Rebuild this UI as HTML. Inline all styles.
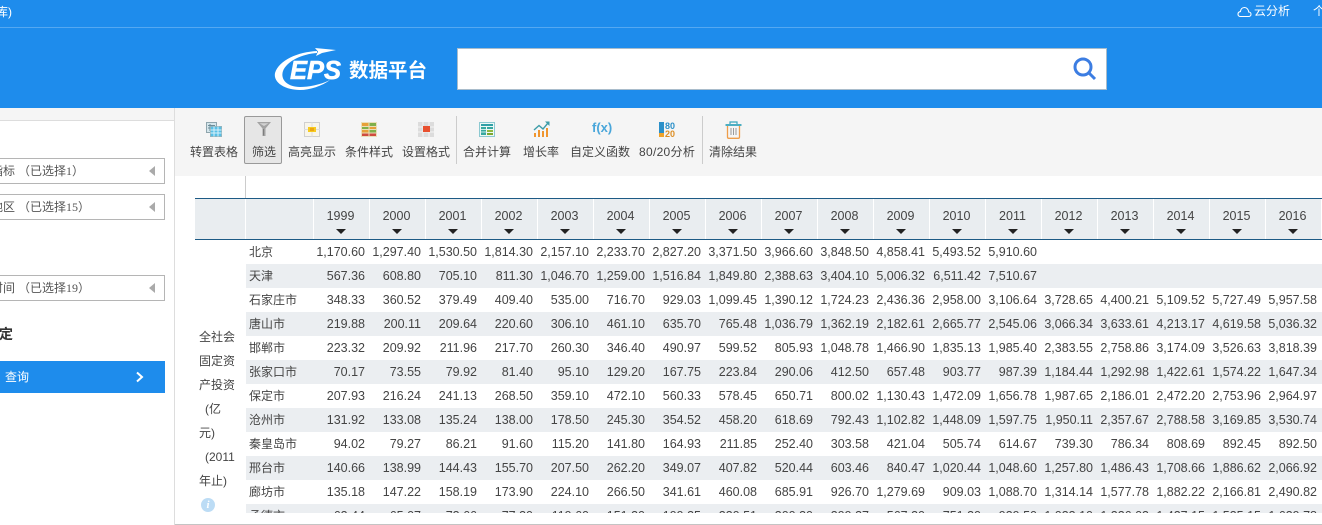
<!DOCTYPE html>
<html><head><meta charset="utf-8"><style>
*{box-sizing:border-box}
html,body{margin:0;padding:0}
body{width:1322px;height:525px;overflow:hidden;position:relative;background:#fff;font-family:"Liberation Sans","Noto Sans CJK SC",sans-serif;color:#333;font-size:12px}
.a{position:absolute;white-space:nowrap}
.tb{position:absolute;top:145px;height:14px;line-height:14px;font-size:12px;color:#444;white-space:nowrap}
.sel{position:absolute;left:-2px;width:167px;height:26px;border:1px solid #b5b5b5;background:#fff;overflow:hidden}
.sel span{position:absolute;left:-8px;top:5px;line-height:15px;font-size:12px;color:#555;white-space:nowrap;font-family:"Liberation Serif","Noto Sans CJK SC",serif}
.sel i{position:absolute;right:9px;top:7px;width:0;height:0;border:5px solid transparent;border-left:0;border-right:6px solid #aaa}
.hd{position:absolute;top:199px;height:40px;background:#e9edf0;border-right:1px solid #fff;text-align:center;font-size:12.5px;line-height:35px;color:#444;padding-right:2px}
.hd:after{content:"";position:absolute;left:50%;margin-left:-6px;top:30px;border:5px solid transparent;border-bottom:0;border-top:5px solid #222}
.wrap{position:absolute;left:246px;top:240px;width:1076px;height:273px;overflow:hidden}
table{border-collapse:collapse;table-layout:fixed;width:1076px;font-size:12.5px;color:#444}
td{height:24px;padding:0 5px 0 0;text-align:right;white-space:nowrap;overflow:hidden;line-height:24px}
td:first-child{text-align:left;padding:0 0 0 3px;font-size:12px;color:#444}
tr:nth-child(even) td{background:#ebeef1}
.r{position:absolute;left:199px;font-size:12px;color:#444;line-height:24px;white-space:nowrap}
</style></head><body>
<div class="a" style="left:0;top:0;width:1322px;height:108px;background:#1e8cec"></div>
<div class="a" style="left:0;top:27px;width:1322px;height:1px;background:#55a8f1"></div>
<div class="a" style="left:-4px;top:5px;color:#fff;font-size:12px;line-height:15px">库)</div>
<svg class="a" style="left:1237px;top:6px" width="15" height="12" viewBox="0 0 15 12"><path d="M3.5 10.5H11.5C13 10.5 14 9.5 14 8.2C14 7 13 6 11.7 6C11.5 3.5 9.8 1.5 7.5 1.5C5.2 1.5 3.7 3.3 3.4 5.6C2 5.8 1 6.8 1 8.2C1 9.5 2 10.5 3.5 10.5Z" fill="none" stroke="#fff" stroke-width="1.1"/></svg>
<div class="a" style="left:1254px;top:4px;color:#fff;font-size:12px;line-height:15px">云分析</div>
<div class="a" style="left:1313px;top:4px;color:#fff;font-size:12px;line-height:15px">个</div>
<svg class="a" style="left:272px;top:46px" width="70" height="46" viewBox="0 0 70 46"><path d="M64 4L43 2L46 5.500L44 10L50 7Z" fill="#fff"/><path d="M45 5C26 6 7 14 3 27C1 37 14 44 28 44C38 44 50 40 58 34C48 39 36 41 28 41C16 41 8 34 11 25C15 15 30 8 45 7Z" fill="#fff"/></svg>
<div class="a" style="left:290px;top:53px;color:#fff;font:italic bold 25.500px/36px 'Liberation Sans',sans-serif;-webkit-text-stroke:.6px #fff">EPS</div>
<div class="a" style="left:349px;top:59px;color:#fff;font-size:19.500px;font-weight:bold;line-height:25px">数据平台</div>
<div class="a" style="left:457px;top:48px;width:650px;height:42px;background:#fff;border:1px solid #a9bccb"></div>
<svg class="a" style="left:1071px;top:55px" width="26" height="26" viewBox="0 0 26 26"><circle cx="12" cy="12" r="8" fill="none" stroke="#3c7de2" stroke-width="3"/><path d="M18 18L24 24" stroke="#3c7de2" stroke-width="3"/></svg>

<div class="a" style="left:0;top:108px;width:175px;height:13px;background:#f5f5f5;border-bottom:1px solid #ddd;border-right:1px solid #ddd"></div>
<div class="a" style="left:174px;top:108px;width:1px;height:417px;background:#ddd"></div>
<div class="sel" style="top:158px"><span>指标 （已选择1）</span><i></i></div>
<div class="sel" style="top:194px"><span>地区 （已选择15）</span><i></i></div>
<div class="sel" style="top:275px"><span>时间 （已选择19）</span><i></i></div>
<div class="a" style="left:-1px;top:325px;font-size:14px;font-weight:bold;line-height:18px;color:#333">定</div>
<div class="a" style="left:0;top:361px;width:165px;height:32px;background:#1e8cec"></div>
<div class="a" style="left:5px;top:370px;color:#fff;font-size:12px;line-height:15px">查询</div>
<svg class="a" style="left:135px;top:371px" width="10" height="12" viewBox="0 0 10 12"><path d="M2 1.500L7 6L2 10.500" fill="none" stroke="#fff" stroke-width="2"/></svg>

<div class="a" style="left:175px;top:108px;width:1147px;height:68px;background:#f5f5f5"></div>
<div class="a" style="left:244px;top:116px;width:38px;height:48px;background:#e6e6e6;border:1px solid #999;border-radius:2px"></div>
<div class="a" style="left:456px;top:116px;width:1px;height:48px;background:#ccc"></div>
<div class="a" style="left:702px;top:116px;width:1px;height:48px;background:#ccc"></div>

<svg class="a" style="left:206px;top:122px" width="16" height="15" viewBox="0 0 16 15"><rect x=".5" y=".5" width="10" height="10" fill="#d5e6ec" stroke="#8fa5ad"/><path d="M2 3.500H9M2 6H4M4 2V9" stroke="#6c8c98"/><rect x="4.500" y="4.500" width="11" height="10" fill="#58c0e6" stroke="#8fb5c0"/><path d="M4.500 8H15.500M4.500 11H15.500M8 4.500V14.500M12 4.500V14.500" stroke="#d8f1fa"/></svg>
<svg class="a" style="left:257px;top:122px" width="14" height="14" viewBox="0 0 14 14"><path d="M0 0H14L8.500 6.500V14H5.500V6.500Z" fill="#a3a3a3"/><path d="M2.500 1.200H11.500L7 4Z" fill="#d2d2d2"/><path d="M6.500 7V13.500" stroke="#7d7d7d"/></svg>
<svg class="a" style="left:304px;top:122px" width="16" height="15" viewBox="0 0 16 15"><rect x=".5" y=".5" width="15" height="14" fill="#f8f5ea" stroke="#d0d0d0"/><path d="M0 7.500H16M8 0V15" stroke="#ddd"/><rect x="4" y="5" width="8" height="5" fill="#f7cb1f"/><rect x="6" y="6" width="4" height="3" fill="#eca613"/></svg>
<svg class="a" style="left:361px;top:122px" width="16" height="15" viewBox="0 0 16 15"><rect width="16" height="15" fill="#eadfb8"/><rect x="1" y="1" width="6.500" height="3" fill="#e7a038"/><rect x="8.500" y="1" width="6.500" height="3" fill="#7fb04a"/><rect x="1" y="5" width="6.500" height="2" fill="#7fb04a"/><rect x="8.500" y="5" width="6.500" height="2" fill="#e7a038"/><rect x="1" y="8" width="6.500" height="2.500" fill="#e7a038"/><rect x="8.500" y="8" width="6.500" height="2.500" fill="#7fb04a"/><rect x="1" y="11.500" width="6.500" height="2.500" fill="#cf4b3f"/><rect x="8.500" y="11.500" width="6.500" height="2.500" fill="#cf4b3f"/></svg>
<svg class="a" style="left:418px;top:122px" width="16" height="15" viewBox="0 0 16 15"><rect width="16" height="15" fill="#dcdcdc"/><path d="M5 0V15M11 0V15M0 5H16M0 10H16" stroke="#f3f3f3"/><rect x="5" y="4" width="7" height="6" fill="#e8502f"/></svg>
<svg class="a" style="left:479px;top:122px" width="16" height="15" viewBox="0 0 16 15"><rect x=".5" y=".5" width="15" height="14" fill="#eef8f6" stroke="#8cc9d1"/><rect x="2" y="2" width="12" height="2" fill="#2f9fa6"/><rect x="2" y="5" width="5" height="8" fill="#37a8a0"/><path d="M2 7.500H7M2 10H7" stroke="#c8ece8"/><rect x="8" y="5" width="6" height="2" fill="#37a8a0"/><rect x="8" y="8" width="6" height="2" fill="#8fb93f"/><rect x="8" y="11" width="6" height="2" fill="#7da832"/></svg>
<svg class="a" style="left:533px;top:121px" width="17" height="16" viewBox="0 0 17 16"><rect x="1" y="12" width="2" height="4" fill="#f0952e"/><rect x="5" y="9" width="2" height="7" fill="#f0952e"/><rect x="9" y="10" width="2" height="6" fill="#f0952e"/><rect x="13" y="7" width="2" height="9" fill="#f0952e"/><path d="M1 9L6 4.500L10 8L15 2" fill="none" stroke="#3d9ca8" stroke-width="1.400"/><path d="M12 .5H16.500V5Z" fill="#3d9ca8"/></svg>
<div class="a" style="left:592px;top:120px;font-size:13px;font-weight:bold;line-height:16px;color:#49a6da">f(x)</div>
<svg class="a" style="left:659px;top:121px" width="18" height="17" viewBox="0 0 18 17"><rect x="0" y="1" width="5" height="11" fill="#2b90c9"/><rect x="0" y="12" width="5" height="4" fill="#efa32c"/><text x="6" y="8" font-family="Liberation Sans" font-weight="bold" font-size="9" fill="#2b90c9">80</text><text x="6" y="16" font-family="Liberation Sans" font-weight="bold" font-size="9" fill="#dd8f26">20</text></svg>
<svg class="a" style="left:725px;top:121px" width="17" height="18" viewBox="0 0 17 18"><path d="M.5 4H16.500" stroke="#39a7bd" stroke-width="1.800"/><path d="M5 3V1H12V3" fill="none" stroke="#39a7bd" stroke-width="1.200"/><path d="M2.500 5V16C2.500 16.800 3 17.300 3.800 17.300H13.200C14 17.300 14.500 16.800 14.500 16V5" fill="none" stroke="#ee9d4a" stroke-width="1.300"/><path d="M6 7V14M8.500 7V14M11 7V14" stroke="#999"/></svg>

<div class="tb" style="left:190px">转置表格</div>
<div class="tb" style="left:252px">筛选</div>
<div class="tb" style="left:288px">高亮显示</div>
<div class="tb" style="left:345px">条件样式</div>
<div class="tb" style="left:402px">设置格式</div>
<div class="tb" style="left:463px">合并计算</div>
<div class="tb" style="left:523px">增长率</div>
<div class="tb" style="left:570px">自定义函数</div>
<div class="tb" style="left:639px;letter-spacing:.3px">80/20分析</div>
<div class="tb" style="left:709px">清除结果</div>

<div class="a" style="left:245px;top:176px;width:1px;height:22px;background:#ccc"></div>
<div class="a" style="left:195px;top:198px;width:1127px;height:1px;background:#1d5a85"></div>
<div class="a" style="left:195px;top:239px;width:1127px;height:1px;background:#1d5a85"></div>
<div class="a" style="left:195px;top:199px;width:51px;height:40px;background:#e9edf0;border-right:1px solid #fff"></div>
<div class="a" style="left:246px;top:199px;width:68px;height:40px;background:#e9edf0;border-right:1px solid #fff"></div>
<div class="hd" style="left:314px;width:56px">1999</div>
<div class="hd" style="left:370px;width:56px">2000</div>
<div class="hd" style="left:426px;width:56px">2001</div>
<div class="hd" style="left:482px;width:56px">2002</div>
<div class="hd" style="left:538px;width:56px">2003</div>
<div class="hd" style="left:594px;width:56px">2004</div>
<div class="hd" style="left:650px;width:56px">2005</div>
<div class="hd" style="left:706px;width:56px">2006</div>
<div class="hd" style="left:762px;width:56px">2007</div>
<div class="hd" style="left:818px;width:56px">2008</div>
<div class="hd" style="left:874px;width:56px">2009</div>
<div class="hd" style="left:930px;width:56px">2010</div>
<div class="hd" style="left:986px;width:56px">2011</div>
<div class="hd" style="left:1042px;width:56px">2012</div>
<div class="hd" style="left:1098px;width:56px">2013</div>
<div class="hd" style="left:1154px;width:56px">2014</div>
<div class="hd" style="left:1210px;width:56px">2015</div>
<div class="hd" style="left:1266px;width:56px">2016</div>

<div class="r" style="top:325px">全社会</div>
<div class="r" style="top:349px">固定资</div>
<div class="r" style="top:373px">产投资</div>
<div class="r" style="top:397px;left:205px">(亿</div>
<div class="r" style="top:421px">元)</div>
<div class="r" style="top:445px;left:205px">(2011</div>
<div class="r" style="top:469px">年止)</div>
<div class="a" style="left:201px;top:498px;width:14px;height:14px;border-radius:50%;background:#bcdcf5;color:#fff;font:italic bold 11px/14px 'Liberation Serif',serif;text-align:center">i</div>

<div class="wrap"><table>
<colgroup><col style="width:68px"><col span="18" style="width:56px"></colgroup>
<tr><td>北京</td><td>1,170.60</td><td>1,297.40</td><td>1,530.50</td><td>1,814.30</td><td>2,157.10</td><td>2,233.70</td><td>2,827.20</td><td>3,371.50</td><td>3,966.60</td><td>3,848.50</td><td>4,858.41</td><td>5,493.52</td><td>5,910.60</td><td></td><td></td><td></td><td></td><td></td></tr>
<tr><td>天津</td><td>567.36</td><td>608.80</td><td>705.10</td><td>811.30</td><td>1,046.70</td><td>1,259.00</td><td>1,516.84</td><td>1,849.80</td><td>2,388.63</td><td>3,404.10</td><td>5,006.32</td><td>6,511.42</td><td>7,510.67</td><td></td><td></td><td></td><td></td><td></td></tr>
<tr><td>石家庄市</td><td>348.33</td><td>360.52</td><td>379.49</td><td>409.40</td><td>535.00</td><td>716.70</td><td>929.03</td><td>1,099.45</td><td>1,390.12</td><td>1,724.23</td><td>2,436.36</td><td>2,958.00</td><td>3,106.64</td><td>3,728.65</td><td>4,400.21</td><td>5,109.52</td><td>5,727.49</td><td>5,957.58</td></tr>
<tr><td>唐山市</td><td>219.88</td><td>200.11</td><td>209.64</td><td>220.60</td><td>306.10</td><td>461.10</td><td>635.70</td><td>765.48</td><td>1,036.79</td><td>1,362.19</td><td>2,182.61</td><td>2,665.77</td><td>2,545.06</td><td>3,066.34</td><td>3,633.61</td><td>4,213.17</td><td>4,619.58</td><td>5,036.32</td></tr>
<tr><td>邯郸市</td><td>223.32</td><td>209.92</td><td>211.96</td><td>217.70</td><td>260.30</td><td>346.40</td><td>490.97</td><td>599.52</td><td>805.93</td><td>1,048.78</td><td>1,466.90</td><td>1,835.13</td><td>1,985.40</td><td>2,383.55</td><td>2,758.86</td><td>3,174.09</td><td>3,526.63</td><td>3,818.39</td></tr>
<tr><td>张家口市</td><td>70.17</td><td>73.55</td><td>79.92</td><td>81.40</td><td>95.10</td><td>129.20</td><td>167.75</td><td>223.84</td><td>290.06</td><td>412.50</td><td>657.48</td><td>903.77</td><td>987.39</td><td>1,184.44</td><td>1,292.98</td><td>1,422.61</td><td>1,574.22</td><td>1,647.34</td></tr>
<tr><td>保定市</td><td>207.93</td><td>216.24</td><td>241.13</td><td>268.50</td><td>359.10</td><td>472.10</td><td>560.33</td><td>578.45</td><td>650.71</td><td>800.02</td><td>1,130.43</td><td>1,472.09</td><td>1,656.78</td><td>1,987.65</td><td>2,186.01</td><td>2,472.20</td><td>2,753.96</td><td>2,964.97</td></tr>
<tr><td>沧州市</td><td>131.92</td><td>133.08</td><td>135.24</td><td>138.00</td><td>178.50</td><td>245.30</td><td>354.52</td><td>458.20</td><td>618.69</td><td>792.43</td><td>1,102.82</td><td>1,448.09</td><td>1,597.75</td><td>1,950.11</td><td>2,357.67</td><td>2,788.58</td><td>3,169.85</td><td>3,530.74</td></tr>
<tr><td>秦皇岛市</td><td>94.02</td><td>79.27</td><td>86.21</td><td>91.60</td><td>115.20</td><td>141.80</td><td>164.93</td><td>211.85</td><td>252.40</td><td>303.58</td><td>421.04</td><td>505.74</td><td>614.67</td><td>739.30</td><td>786.34</td><td>808.69</td><td>892.45</td><td>892.50</td></tr>
<tr><td>邢台市</td><td>140.66</td><td>138.99</td><td>144.43</td><td>155.70</td><td>207.50</td><td>262.20</td><td>349.07</td><td>407.82</td><td>520.44</td><td>603.46</td><td>840.47</td><td>1,020.44</td><td>1,048.60</td><td>1,257.80</td><td>1,486.43</td><td>1,708.66</td><td>1,886.62</td><td>2,066.92</td></tr>
<tr><td>廊坊市</td><td>135.18</td><td>147.22</td><td>158.19</td><td>173.90</td><td>224.10</td><td>266.50</td><td>341.61</td><td>460.08</td><td>685.91</td><td>926.70</td><td>1,279.69</td><td>909.03</td><td>1,088.70</td><td>1,314.14</td><td>1,577.78</td><td>1,882.22</td><td>2,166.81</td><td>2,490.82</td></tr>
<tr><td>承德市</td><td>63.44</td><td>65.07</td><td>73.66</td><td>77.30</td><td>119.60</td><td>151.30</td><td>199.35</td><td>230.51</td><td>300.30</td><td>399.37</td><td>567.30</td><td>751.30</td><td>939.50</td><td>1,033.10</td><td>1,226.03</td><td>1,427.15</td><td>1,535.15</td><td>1,639.78</td></tr>
</table></div>
<div class="a" style="left:175px;top:524px;width:1147px;height:1px;background:#c4c4c4"></div>
</body></html>
